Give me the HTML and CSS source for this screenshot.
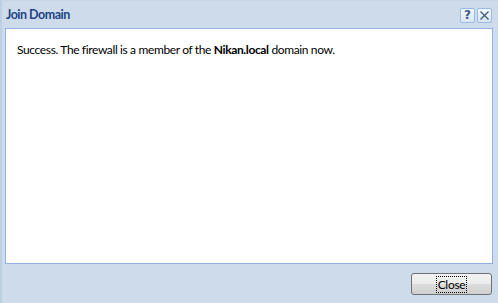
FILE: index.html
```html
<!DOCTYPE html>
<html lang="en">
<head>
  <meta charset="UTF-8" />
  <title>Join Domain</title>
  <link rel="stylesheet" href="styles.css">
</head>
<body>
  <div class="dialog">
    <div class="header">
      <span class="title">Join Domain</span>
      <div class="tools">
        <button class="tool">?</button>
        <button class="tool">
          <svg width="11" height="11" viewBox="0 0 11 11"><path d="M1.5 1.5 L9.5 9.5 M9.5 1.5 L1.5 9.5" stroke="#3c5a86" stroke-width="1.3" fill="none"/></svg>
        </button>
      </div>
    </div>
    <div class="body">
      <p>Success. The firewall is a member of the <b>Nikan.local</b> domain now.</p>
    </div>
    <div class="footer">
      <button class="btn"><span class="focus">Close</span></button>
    </div>
  </div>
</body>
</html>
```

FILE: styles.css
```css
* { box-sizing: border-box; margin: 0; padding: 0; }
html, body { width: 100%; height: 100%; overflow: hidden; }
body { font-family: Lato, 'Open Sans', sans-serif; font-size: 12px; color: #000; background: #cddbeb; }

.dialog { width: 498px; height: 303px; display: flex; flex-direction: column; background: #cddbeb; border-left: 2px solid #bfcfe2; border-top: 1px solid #c6d6e9; }

.header { height: 26px; display: flex; align-items: center; justify-content: space-between; padding: 0 6px 0 4px; }
.title { font-family: Lato, sans-serif; font-weight: bold; font-size: 12.5px; letter-spacing: -0.5px; color: #1d4486; }
.tools { display: flex; gap: 2px; margin-top: 2px; }
.tool { width: 15px; height: 15px; border: 1px solid #99bbe8; border-radius: 2px; background: linear-gradient(#f4f8fd, #d9e5f4); color: #3c5a86; font: bold 12px 'DejaVu Sans', sans-serif; line-height: 12px; display: flex; align-items: center; justify-content: center; }

.body { height: 236px; margin: 1px 5px 0 3px; background: #fff; border: 1px solid #8db2e3; padding: 12px 11px; }
.body p { font-size: 12px; letter-spacing: -0.37px; line-height: 18px; }
.body b { font-weight: bold; }

.footer { flex: 1; display: flex; justify-content: flex-end; align-items: flex-start; padding: 9px 6px 0 0; }
.btn { width: 81px; height: 22px; border: 1px solid #707070; border-radius: 3px; background: linear-gradient(#f2f2f2 0%, #ebebeb 50%, #dddddd 51%, #cfcfcf 100%); font: 12px Lato, sans-serif; letter-spacing: -0.3px; display: flex; align-items: center; justify-content: center; }
.focus { border: 1px dotted #000; padding: 0 1px; line-height: 15px; }
```
